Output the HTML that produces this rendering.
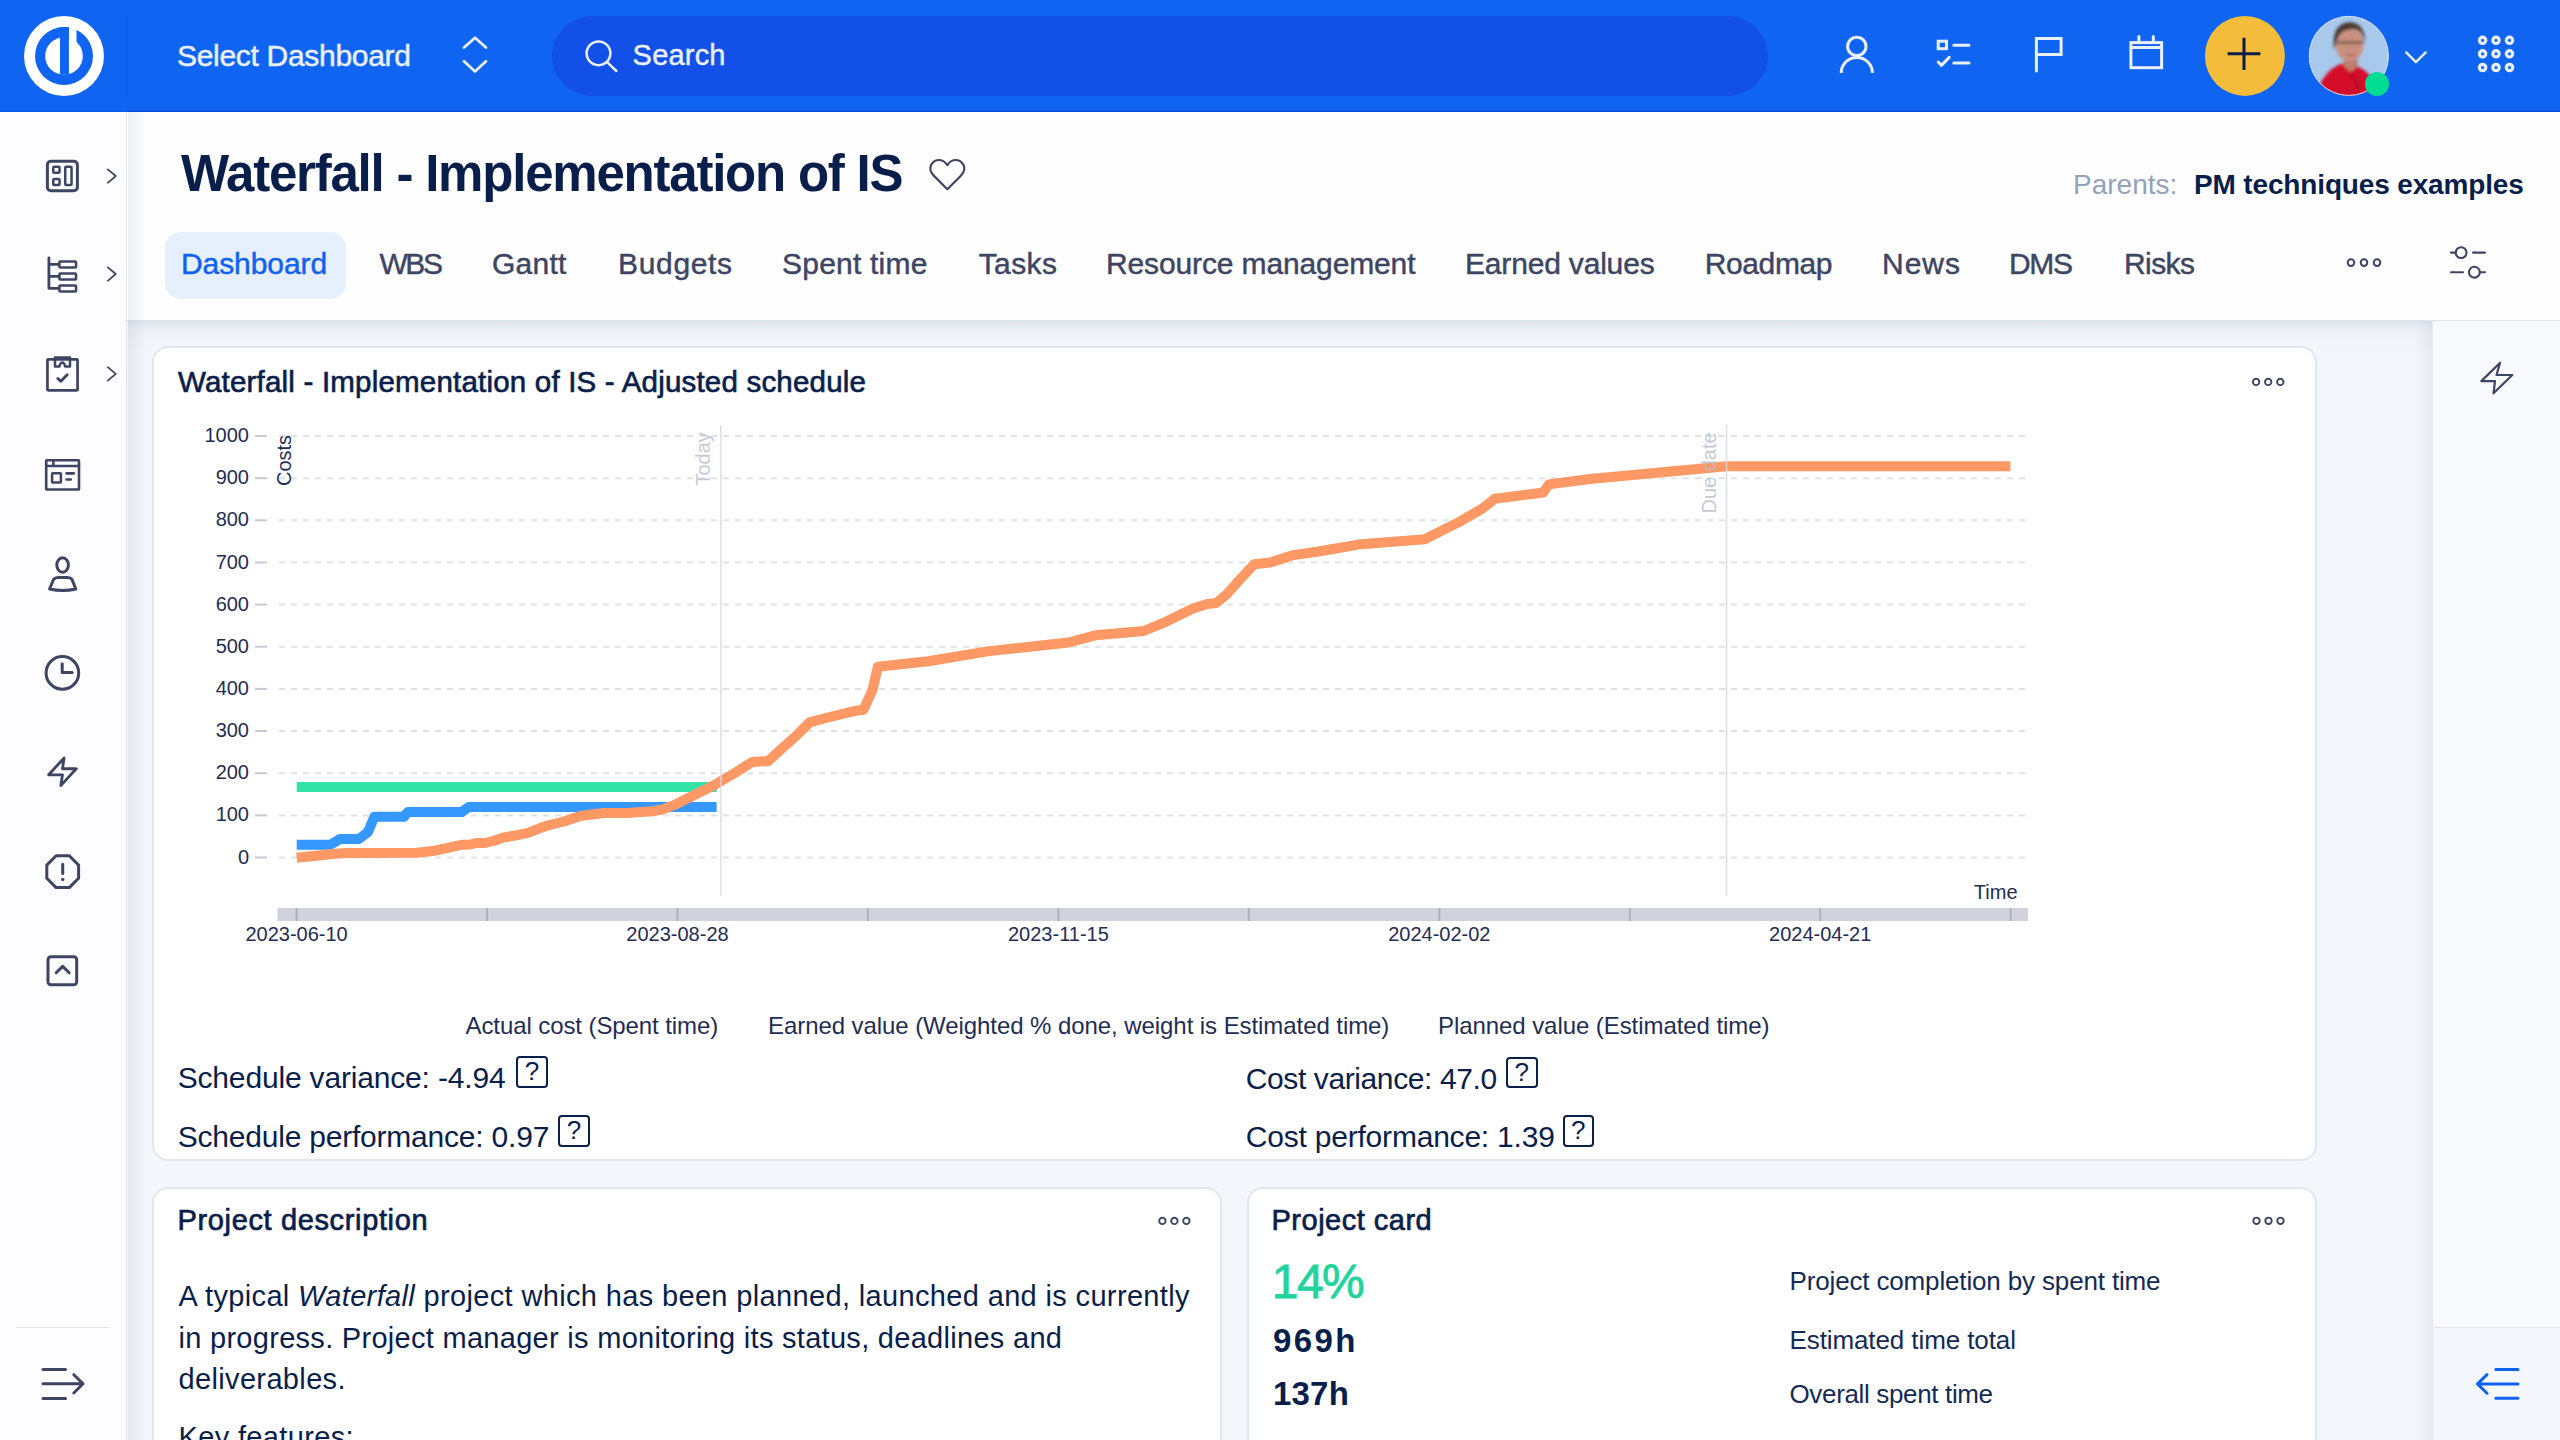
<!DOCTYPE html>
<html><head><meta charset="utf-8">
<style>
*{box-sizing:border-box;margin:0;padding:0}
html,body{width:2560px;height:1440px;overflow:hidden;background:#f3f7fc;font-family:"Liberation Sans",sans-serif;color:#0b1f4b}
.a{position:absolute}
.t{position:absolute;white-space:nowrap;line-height:1}
svg{position:absolute;overflow:visible}
#hdr{left:0;top:0;width:2560px;height:112px;background:#0f65f1}
#side{left:0;top:112px;width:127px;height:1328px;background:#fdfdff;border-right:1px solid #e2e7ef}
#ph{left:127px;top:112px;width:2433px;height:209px;background:#fefeff;border-bottom:1px solid #dde3ec}
#rp{left:2432px;top:321px;width:128px;height:1119px;background:#f9fafe;border-left:1px solid #e4e8f0}
.card{position:absolute;background:#fff;border:2px solid #e1e6ee;border-radius:16px}
.qb{position:absolute;width:31.5px;height:31.5px;border:2.2px solid #0a1e4b;border-radius:4px;font-size:26px;line-height:27px;text-align:center;color:#0a1e4b}
</style></head>
<body>
<!-- HEADER -->
<div id="hdr" class="a"></div>
<div class="a" style="left:127px;top:104px;width:2433px;height:7px;background:linear-gradient(rgba(0,60,220,0),rgba(0,60,220,0.12))"></div>
<div class="a" style="left:127px;top:111px;width:2433px;height:1px;background:#0244e5"></div>
<div class="a" style="left:0;top:111px;width:127px;height:1px;background:#0a5af0"></div>
<div class="a" style="left:126.5px;top:16px;width:1.5px;height:80px;background:#1a52e8"></div>
<svg style="left:0;top:0" width="128" height="112">
  <circle cx="64" cy="56" r="40" fill="#fff"/>
  <circle cx="64" cy="56" r="29" fill="#0f65f1"/>
  <circle cx="64" cy="56" r="18.8" fill="#fff"/>
  <rect x="68.9" y="20" width="7.6" height="24" fill="#fff"/>
  <rect x="60" y="27.2" width="8.9" height="47.5" fill="#0f65f1"/>
</svg>
<div class="t" style="left:177px;top:40.7px;font-size:30px;color:#e9effc;letter-spacing:-0.3px;-webkit-text-stroke:0.5px #e9effc">Select Dashboard</div>
<svg style="left:0;top:0" width="2560" height="112" fill="none" stroke="#e9effc" stroke-width="3" stroke-linecap="round" stroke-linejoin="round">
  <path d="M464 47.5 L475 37.8 L486 47.5 M464 61.3 L475 71.5 L486 61.3" stroke-width="2.8"/>
</svg>
<div class="a" style="left:552px;top:16px;width:1216px;height:80px;border-radius:40px;background:#1250e7"></div>
<svg style="left:0;top:0" width="2560" height="112" fill="none" stroke="#e9effc" stroke-width="2.6" stroke-linecap="round" stroke-linejoin="round">
  <circle cx="598.5" cy="53.3" r="11.9" stroke-width="2.5"/><path d="M607.6 62.6 L616.4 71" stroke-width="2.5"/>
  <circle cx="1856.8" cy="46.4" r="9.2" stroke-width="3"/>
  <path d="M1841.2 73 A15.6 15.6 0 0 1 1872.4 73" stroke-width="3" stroke-linecap="butt"/>
  <rect x="1938.2" y="41.2" width="8.3" height="7.5" stroke-width="3" stroke-linejoin="miter"/>
  <path d="M1953.8 45.3 H1969 M1953.8 62.9 H1969 M1938.2 62 L1941.4 65.4 L1949.2 57.4" stroke-width="3"/>
  <path d="M2036.4 71 V38.4 H2061.1 V54.4 H2036.4" stroke-width="3" stroke-linejoin="miter"/>
  <rect x="2130.9" y="42.6" width="30.7" height="25.1" stroke-width="3" stroke-linejoin="miter"/>
  <path d="M2130.9 47.6 H2161.6 M2138.9 36.5 V42 M2153.3 36.5 V42" stroke-width="3"/>
  <path d="M2406.2 52.4 L2415.9 62.2 L2425.7 52.4" stroke-width="2.4"/>
  <circle cx="2482.6" cy="40.3" r="3.2" stroke-width="3.2"/><circle cx="2496" cy="40.3" r="3.2" stroke-width="3.2"/><circle cx="2509.5" cy="40.3" r="3.2" stroke-width="3.2"/>
  <circle cx="2482.6" cy="53.8" r="3.2" stroke-width="3.2"/><circle cx="2496" cy="53.8" r="3.2" stroke-width="3.2"/><circle cx="2509.5" cy="53.8" r="3.2" stroke-width="3.2"/>
  <circle cx="2482.6" cy="67.5" r="3.2" stroke-width="3.2"/><circle cx="2496" cy="67.5" r="3.2" stroke-width="3.2"/><circle cx="2509.5" cy="67.5" r="3.2" stroke-width="3.2"/>
</svg>
<div class="t" style="left:632.6px;top:41.1px;font-size:29px;color:#e9effc;letter-spacing:0.2px;-webkit-text-stroke:0.45px #e9effc">Search</div>
<svg style="left:0;top:0" width="2560" height="112">
  <circle cx="2244.9" cy="55.9" r="40" fill="#f3bc3a"/>
  <path d="M2227.6 53.8 H2260.4 M2244 37.8 V69.9" stroke="#0b1b4a" stroke-width="3"/>
  <defs><clipPath id="av"><circle cx="2348.8" cy="55.9" r="40"/></clipPath></defs>
  <filter id="blr" x="-20%" y="-20%" width="140%" height="140%"><feGaussianBlur stdDeviation="1.6"/></filter>
  <g clip-path="url(#av)">
    <rect x="2308" y="15" width="82" height="82" fill="#a8c8ec"/>
    <g filter="url(#blr)">
    <path d="M2316 100 L2319 86 Q2326 71 2338 65 L2347 62 L2357 66 Q2366 70 2374 80 L2392 100 Z" fill="#d3102c"/>
    <path d="M2343 56 L2357 56 L2358 66 L2350 72 L2344 66 Z" fill="#b9806e"/>
    <ellipse cx="2349.5" cy="44" rx="14" ry="17.5" fill="#c99080"/>
    <path d="M2334 50 Q2331 24 2349 22 Q2366 23 2365 44 Q2363 30 2354 29 Q2340 29 2337 40 Z" fill="#4a3a33"/>
    <path d="M2337 42.5 H2363" stroke="#5a4440" stroke-width="2"/>
    <path d="M2344 54 Q2350 56 2356 54" stroke="#b0605a" stroke-width="1.5" fill="none"/>
    <path d="M2350 74 L2355 78 L2358 90" stroke="#8a0a1a" stroke-width="1.5" fill="none"/>
    </g>
  </g>
  <circle cx="2348.8" cy="55.9" r="39.5" fill="none" stroke="#cfe0f4" stroke-width="1"/>
  <circle cx="2377" cy="84" r="12" fill="#00dd92"/>
</svg>
<!-- SIDEBAR -->
<div id="side" class="a"></div>
<svg style="left:0;top:0" width="128" height="1440" fill="none" stroke="#3e4563" stroke-width="3" stroke-linecap="round" stroke-linejoin="round">
  <rect x="47.4" y="161.2" width="30" height="29.5" rx="3.5"/>
  <rect x="53.25" y="166.75" width="6.3" height="6" rx="1" stroke-width="2.5"/>
  <rect x="53.25" y="179" width="6.3" height="6" rx="1" stroke-width="2.5"/>
  <rect x="65.25" y="166.75" width="6.3" height="18.25" rx="1" stroke-width="2.5"/>
  <path d="M107.8 169.3 L115.8 176 L107.8 182.8" stroke-width="1.7"/>
  <path d="M48.9 257.8 V288.3 H59 M48.9 264.4 H59 M48.9 276.4 H59" stroke-width="2.8"/>
  <rect x="59.35" y="261.45" width="16.7" height="6.05" rx="1" stroke-width="2.5"/>
  <rect x="59.35" y="273.45" width="16.7" height="6.05" rx="1" stroke-width="2.5"/>
  <rect x="59.35" y="285.45" width="16.7" height="6.05" rx="1" stroke-width="2.5"/>
  <path d="M107.8 267.3 L115.8 274 L107.8 280.8" stroke-width="1.7"/>
  <rect x="47.45" y="359.3" width="30.1" height="31" rx="0.8" stroke-width="2.7"/>
  <path d="M55 357.4 H70 V366.5 H65.2 Q64.2 362.5 62.3 362.5 Q60.4 362.5 59.4 366.5 H55 Z" stroke-width="2.5"/>
  <path d="M57.8 378.4 L60.8 381.3 L67.2 374.7" stroke-width="2.8"/>
  <path d="M107.8 367.1 L115.8 373.8 L107.8 380.6" stroke-width="1.7"/>
  <rect x="46.2" y="460.2" width="32.8" height="29.3" rx="0.6" stroke-width="2.6"/>
  <path d="M46.2 466 H79 M53.4 460.2 V466" stroke-width="2.6"/>
  <rect x="52.1" y="473.3" width="8.8" height="9.1" rx="0.6" stroke-width="2.5"/>
  <path d="M66.6 473.4 H73.8 M66.6 479.5 H70.8" stroke-width="2.7"/>
  <ellipse cx="62.6" cy="565" rx="5.8" ry="7.3"/>
  <path d="M49.6 589 L53.5 579.5 Q55 577.5 58 577.5 H67.5 Q70.5 577.5 72 579.5 L75.8 589 Q62.7 592 49.6 589 Z"/>
  <circle cx="62.4" cy="672.9" r="16.3"/>
  <path d="M62.2 663.8 V672.4 H72.2"/>
  <path d="M64.06 758 L48.6 774.8 H62.5 L60.8 785.6 L76.25 768.75 H62.5 Z" stroke-width="2.8"/>
  <polygon points="78.6,878.3 69.3,887.6 56.1,887.6 46.8,878.3 46.8,865.1 56.1,855.8 69.3,855.8 78.6,865.1"/>
  <path d="M62.7 864.2 V873.6"/>
  <circle cx="62.7" cy="879.4" r="1.7" fill="#3e4563" stroke="none"/>
  <rect x="48" y="956.7" width="28.7" height="28.1" rx="3"/>
  <path d="M56.2 972.8 L62.7 966.4 L69.2 972.8"/>
  <path d="M43 1369.5 H65.5 M43 1383.8 H83 M43 1398.4 H65.5 M73.8 1374.7 L83 1383.8 L73.8 1393"/>
</svg>
<div class="a" style="left:16px;top:1326.5px;width:94px;height:1.5px;background:#dfe6f2"></div>

<!-- PAGE HEADER -->
<div id="ph" class="a"></div>
<div class="t" style="left:181px;top:147.7px;font-size:51px;font-weight:700;color:#0a1e4b;letter-spacing:-1.22px">Waterfall - Implementation of IS</div>
<svg style="left:0;top:0" width="1000" height="200" fill="none" stroke="#3e4563" stroke-width="2.2" stroke-linejoin="round">
  <path d="M947.3 189.2 L933.5 175.4 Q928.6 170.4 931.2 164.8 Q934 159.8 939.6 160 Q944.4 160.4 947.3 165.2 Q950.2 160.4 955 160 Q960.6 159.8 963.4 164.8 Q966 170.4 961.1 175.4 Z"/>
</svg>
<div class="t" style="left:2073px;top:171px;font-size:28px;color:#93a2ba">Parents:</div>
<div class="t" style="left:2194px;top:171px;font-size:28px;font-weight:700;color:#0a1e4b;letter-spacing:-0.15px">PM techniques examples</div>
<div class="a" style="left:165px;top:232px;width:181px;height:67px;border-radius:16px;background:#e6effc"></div>
<div class="t" style="left:181px;top:249.2px;font-size:30px;color:#0e62f0;-webkit-text-stroke:0.45px #0e62f0;letter-spacing:-0.08px">Dashboard</div>
<div class="t" style="left:379.5px;top:249.2px;font-size:30px;color:#3d4563;-webkit-text-stroke:0.45px #3d4563;letter-spacing:-2.45px">WBS</div>
<div class="t" style="left:492px;top:249.2px;font-size:30px;color:#3d4563;-webkit-text-stroke:0.45px #3d4563;letter-spacing:0.25px">Gantt</div>
<div class="t" style="left:618px;top:249.2px;font-size:30px;color:#3d4563;-webkit-text-stroke:0.45px #3d4563;letter-spacing:0.67px">Budgets</div>
<div class="t" style="left:782px;top:249.2px;font-size:30px;color:#3d4563;-webkit-text-stroke:0.45px #3d4563;letter-spacing:0.22px">Spent time</div>
<div class="t" style="left:978.7px;top:249.2px;font-size:30px;color:#3d4563;-webkit-text-stroke:0.45px #3d4563;letter-spacing:0.4px">Tasks</div>
<div class="t" style="left:1106px;top:249.2px;font-size:30px;color:#3d4563;-webkit-text-stroke:0.45px #3d4563;letter-spacing:-0.13px">Resource management</div>
<div class="t" style="left:1465px;top:249.2px;font-size:30px;color:#3d4563;-webkit-text-stroke:0.45px #3d4563;letter-spacing:-0.18px">Earned values</div>
<div class="t" style="left:1704.7px;top:249.2px;font-size:30px;color:#3d4563;-webkit-text-stroke:0.45px #3d4563;letter-spacing:-0.38px">Roadmap</div>
<div class="t" style="left:1882px;top:249.2px;font-size:30px;color:#3d4563;-webkit-text-stroke:0.45px #3d4563;letter-spacing:1px">News</div>
<div class="t" style="left:2009px;top:249.2px;font-size:30px;color:#3d4563;-webkit-text-stroke:0.45px #3d4563;letter-spacing:-1.35px">DMS</div>
<div class="t" style="left:2124px;top:249.2px;font-size:30px;color:#3d4563;-webkit-text-stroke:0.45px #3d4563;letter-spacing:-0.6px">Risks</div>
<svg style="left:0;top:0" width="2560" height="320" fill="none" stroke="#3d4563" stroke-width="2.2" stroke-linecap="round">
  <circle cx="2351" cy="262.6" r="3.3" stroke-width="2"/><circle cx="2364" cy="262.6" r="3.3" stroke-width="2"/><circle cx="2377" cy="262.6" r="3.3" stroke-width="2"/>
  <circle cx="2461.1" cy="252.6" r="5.4" stroke-width="2.1"/><path d="M2451 252.6 H2455.6 M2473 252.6 H2485" stroke-width="2.1"/>
  <circle cx="2474.4" cy="272.2" r="5.4" stroke-width="2.1"/><path d="M2451 272.2 H2463 M2479.8 272.2 H2485" stroke-width="2.1"/>
</svg>

<!-- RIGHT PANEL -->
<div id="rp" class="a"></div>
<div class="a" style="left:2433px;top:1326.5px;width:127px;height:1.5px;background:#e1e6ef"></div>
<div class="a" style="left:2433px;top:1328px;width:127px;height:112px;background:#f4f8fd"></div>
<svg style="left:0;top:0" width="2560" height="1440" fill="none" stroke-width="2.6" stroke-linecap="round" stroke-linejoin="round">
  <path d="M2500.1 362.8 L2481.3 381.1 H2495 L2493.5 393.3 L2512.3 375 H2496.5 Z" stroke="#3e4563" stroke-width="2.2"/>
  <path d="M2495.8 1369.4 H2518 M2477.5 1383.9 H2518 M2495.8 1398.3 H2518 M2487 1374.6 L2477.5 1383.9 L2487 1393.2" stroke="#0f62f0" stroke-width="3"/>
</svg>
<!-- CONTENT -->
<div class="a" style="left:128px;top:321px;width:2304px;height:28px;background:linear-gradient(rgba(20,30,50,0.085),rgba(20,30,50,0.045) 5px,rgba(20,30,50,0.015) 16px,rgba(20,30,50,0))"></div>
<div class="a" style="left:128px;top:112px;width:18px;height:1328px;background:linear-gradient(90deg,rgba(20,30,50,0.07),rgba(20,30,50,0))"></div>
<div class="a" style="left:2414px;top:321px;width:18px;height:1119px;background:linear-gradient(90deg,rgba(20,30,50,0),rgba(20,30,50,0.06))"></div>
<div class="card" style="left:152px;top:345.5px;width:2165px;height:815.5px"></div>
<div class="card" style="left:152px;top:1187px;width:1070px;height:300px"></div>
<div class="card" style="left:1247px;top:1187px;width:1070px;height:300px"></div>
<div class="t" style="left:178px;top:366.7px;font-size:29.5px;color:#0a1e4b;letter-spacing:0.2px;-webkit-text-stroke:0.65px #0a1e4b">Waterfall - Implementation of IS - Adjusted schedule</div>
<svg style="left:0;top:0" width="2560" height="1440" fill="none" stroke="#3d4563" stroke-width="1.9">
  <circle cx="2256.1" cy="381.9" r="3.2"/><circle cx="2268.2" cy="381.9" r="3.2"/><circle cx="2280.3" cy="381.9" r="3.2"/>
  <circle cx="1162.4" cy="1220.9" r="3.2"/><circle cx="1174.4" cy="1220.9" r="3.2"/><circle cx="1186.4" cy="1220.9" r="3.2"/>
  <circle cx="2256.5" cy="1220.8" r="3.2"/><circle cx="2268.5" cy="1220.8" r="3.2"/><circle cx="2280.5" cy="1220.8" r="3.2"/>
</svg>
<svg style="left:0;top:0" width="2560" height="1440">
<path d="M279 857.5 H2026" stroke="#e2e2e4" stroke-width="2" stroke-dasharray="6 6"/>
<path d="M255 857.5 H267" stroke="#c8c9d4" stroke-width="2"/>
<path d="M279 815.4 H2026" stroke="#e2e2e4" stroke-width="2" stroke-dasharray="6 6"/>
<path d="M255 815.4 H267" stroke="#c8c9d4" stroke-width="2"/>
<path d="M279 773.2 H2026" stroke="#e2e2e4" stroke-width="2" stroke-dasharray="6 6"/>
<path d="M255 773.2 H267" stroke="#c8c9d4" stroke-width="2"/>
<path d="M279 731.0 H2026" stroke="#e2e2e4" stroke-width="2" stroke-dasharray="6 6"/>
<path d="M255 731.0 H267" stroke="#c8c9d4" stroke-width="2"/>
<path d="M279 688.9 H2026" stroke="#e2e2e4" stroke-width="2" stroke-dasharray="6 6"/>
<path d="M255 688.9 H267" stroke="#c8c9d4" stroke-width="2"/>
<path d="M279 646.7 H2026" stroke="#e2e2e4" stroke-width="2" stroke-dasharray="6 6"/>
<path d="M255 646.7 H267" stroke="#c8c9d4" stroke-width="2"/>
<path d="M279 604.6 H2026" stroke="#e2e2e4" stroke-width="2" stroke-dasharray="6 6"/>
<path d="M255 604.6 H267" stroke="#c8c9d4" stroke-width="2"/>
<path d="M279 562.5 H2026" stroke="#e2e2e4" stroke-width="2" stroke-dasharray="6 6"/>
<path d="M255 562.5 H267" stroke="#c8c9d4" stroke-width="2"/>
<path d="M279 520.3 H2026" stroke="#e2e2e4" stroke-width="2" stroke-dasharray="6 6"/>
<path d="M255 520.3 H267" stroke="#c8c9d4" stroke-width="2"/>
<path d="M279 478.2 H2026" stroke="#e2e2e4" stroke-width="2" stroke-dasharray="6 6"/>
<path d="M255 478.2 H267" stroke="#c8c9d4" stroke-width="2"/>
<path d="M279 436.0 H2026" stroke="#e2e2e4" stroke-width="2" stroke-dasharray="6 6"/>
<path d="M255 436.0 H267" stroke="#c8c9d4" stroke-width="2"/>
<g font-family="Liberation Sans" font-size="20" fill="#1f2d55" text-anchor="end"><text x="249" y="863.5">0</text><text x="249" y="821.4">100</text><text x="249" y="779.2">200</text><text x="249" y="737.0">300</text><text x="249" y="694.9">400</text><text x="249" y="652.7">500</text><text x="249" y="610.6">600</text><text x="249" y="568.5">700</text><text x="249" y="526.3">800</text><text x="249" y="484.2">900</text><text x="249" y="442.0">1000</text></g>
<text transform="translate(291,486) rotate(-90)" font-family="Liberation Sans" font-size="20" fill="#1f2d55">Costs</text>
<rect x="277.5" y="908" width="1750.5" height="13" fill="#d1d2dc"/>
<path d="M296.6 908 V921" stroke="#aeb0bd" stroke-width="2"/>
<path d="M487.1 908 V921" stroke="#aeb0bd" stroke-width="2"/>
<path d="M677.5 908 V921" stroke="#aeb0bd" stroke-width="2"/>
<path d="M867.9 908 V921" stroke="#aeb0bd" stroke-width="2"/>
<path d="M1058.4 908 V921" stroke="#aeb0bd" stroke-width="2"/>
<path d="M1248.8 908 V921" stroke="#aeb0bd" stroke-width="2"/>
<path d="M1439.3 908 V921" stroke="#aeb0bd" stroke-width="2"/>
<path d="M1629.8 908 V921" stroke="#aeb0bd" stroke-width="2"/>
<path d="M1820.2 908 V921" stroke="#aeb0bd" stroke-width="2"/>
<path d="M2010.7 908 V921" stroke="#aeb0bd" stroke-width="2"/>
<g font-family="Liberation Sans" font-size="20" fill="#1f2d55" text-anchor="middle"><text x="296.6" y="940.5">2023-06-10</text><text x="677.5" y="940.5">2023-08-28</text><text x="1058.4" y="940.5">2023-11-15</text><text x="1439.3" y="940.5">2024-02-02</text><text x="1820.2" y="940.5">2024-04-21</text><text x="2017.5" y="899" text-anchor="end">Time</text></g>
<polyline points="296.7,787 716.6,787" fill="none" stroke="#34e3a8" stroke-width="10"/>
<polyline points="296.7,844.8 330.3,844.8 340.2,838.9 359.1,838.9 368,832 374.3,816.8 404,816.8 407.8,812.1 461.5,812.1 468.7,807.1 716.6,807.1" fill="none" stroke="#3598fe" stroke-width="10" stroke-linejoin="round"/>
<polyline points="296.7,857.8 330.3,854.3 344.7,853.1 416.6,852.7 432.7,851.1 461.5,844.8 470.5,844.5 475.9,843 484.9,843 495.6,840.3 502.8,837.6 513.6,835.8 528,832.8 538.8,828.6 549.5,825 563.9,821.5 580.1,816 603.4,813 626.8,813 652,811.2 662.7,809.4 675.3,804.6 684.3,799.9 696.9,793.8 714.9,784.8 735.9,772.2 752.1,762 768.3,761 780.9,749.4 795.2,736.8 809.6,722.4 825.8,718 856.3,710.7 863.5,709.8 872.5,690 877.9,666.7 928.2,661.3 987.5,651.4 1068.4,642.5 1095.3,635.3 1143.6,631 1165.9,621.8 1192.9,608.4 1207.3,603.9 1216.3,603 1227,594 1241.4,577.8 1254,564.3 1270.2,562.5 1291.7,555.4 1316.9,551.8 1358.2,544.6 1424.7,539.2 1458.8,522.1 1482.2,508.6 1494.8,498.8 1543.3,492.5 1548.7,484.4 1590,479 1726.5,466.2 2010.4,466.2" fill="none" stroke="#fe9966" stroke-width="10" stroke-linejoin="round"/>
<path d="M720.8 425 V896" stroke="#d8d9e0" stroke-opacity="0.75" stroke-width="1.8"/>
<path d="M1726.5 425 V896" stroke="#d8d9e0" stroke-opacity="0.75" stroke-width="1.8"/>
<text transform="translate(710,485.5) rotate(-90)" font-family="Liberation Sans" font-size="20" fill="#b4bccb" fill-opacity="0.8">Today</text>
<text transform="translate(1716,513.5) rotate(-90)" font-family="Liberation Sans" font-size="20" fill="#b4bccb" fill-opacity="0.8">Due date</text>
<g font-family="Liberation Sans" font-size="24" fill="#1f2d55"><text x="465.5" y="1033.6" letter-spacing="-0.09">Actual cost (Spent time)</text><text x="768" y="1033.6" letter-spacing="-0.07">Earned value (Weighted % done, weight is Estimated time)</text><text x="1438" y="1033.6" letter-spacing="-0.07">Planned value (Estimated time)</text></g>
</svg>
<div class="t" style="left:177.7px;top:1063.2px;font-size:30px;color:#0a1e4b;letter-spacing:-0.17px">Schedule variance: -4.94</div>
<div class="t" style="left:177.7px;top:1121.9px;font-size:30px;color:#0a1e4b;letter-spacing:-0.21px">Schedule performance: 0.97</div>
<div class="t" style="left:1245.8px;top:1063.5px;font-size:30px;color:#0a1e4b;letter-spacing:-0.4px">Cost variance: 47.0</div>
<div class="t" style="left:1245.8px;top:1121.6px;font-size:30px;color:#0a1e4b;letter-spacing:-0.21px">Cost performance: 1.39</div>
<div class="qb" style="left:516.2px;top:1056.1px">?</div>
<div class="qb" style="left:558.2px;top:1115.2px">?</div>
<div class="qb" style="left:1506px;top:1056.6px">?</div>
<div class="qb" style="left:1562.5px;top:1115.3px">?</div>
<div class="t" style="left:177.5px;top:1206px;font-size:29px;color:#0a1e4b;letter-spacing:0.64px;-webkit-text-stroke:0.7px #0a1e4b">Project description</div>
<div class="t" style="left:178.5px;top:1282px;font-size:29px;color:#0a1e4b;letter-spacing:0.35px">A typical <i>Waterfall</i> project which has been planned, launched and is currently</div>
<div class="t" style="left:178.5px;top:1323.6px;font-size:29px;color:#0a1e4b;letter-spacing:0.29px">in progress. Project manager is monitoring its status, deadlines and</div>
<div class="t" style="left:178.5px;top:1365.1px;font-size:29px;color:#0a1e4b;letter-spacing:0.35px">deliverables.</div>
<div class="t" style="left:178.5px;top:1423.2px;font-size:29px;color:#0a1e4b;letter-spacing:0.35px">Key features:</div>
<div class="t" style="left:1271.5px;top:1206.1px;font-size:29px;color:#0a1e4b;letter-spacing:0.5px;-webkit-text-stroke:0.7px #0a1e4b">Project card</div>
<div class="t" style="left:1271.7px;top:1257.9px;font-size:48px;color:#22d49b;letter-spacing:-1.5px;-webkit-text-stroke:0.8px #22d49b">14%</div>
<div class="t" style="left:1273px;top:1323.8px;font-size:33px;font-weight:700;color:#0a1e4b;letter-spacing:2.4px">969h</div>
<div class="t" style="left:1273px;top:1377.4px;font-size:33px;font-weight:700;color:#0a1e4b;letter-spacing:0.2px">137h</div>
<div class="t" style="left:1789.5px;top:1268px;font-size:26px;color:#142a56;letter-spacing:-0.15px">Project completion by spent time</div>
<div class="t" style="left:1789.5px;top:1327px;font-size:26px;color:#142a56;letter-spacing:-0.1px">Estimated time total</div>
<div class="t" style="left:1789.5px;top:1381.2px;font-size:26px;color:#142a56;letter-spacing:-0.35px">Overall spent time</div>
</body></html>
